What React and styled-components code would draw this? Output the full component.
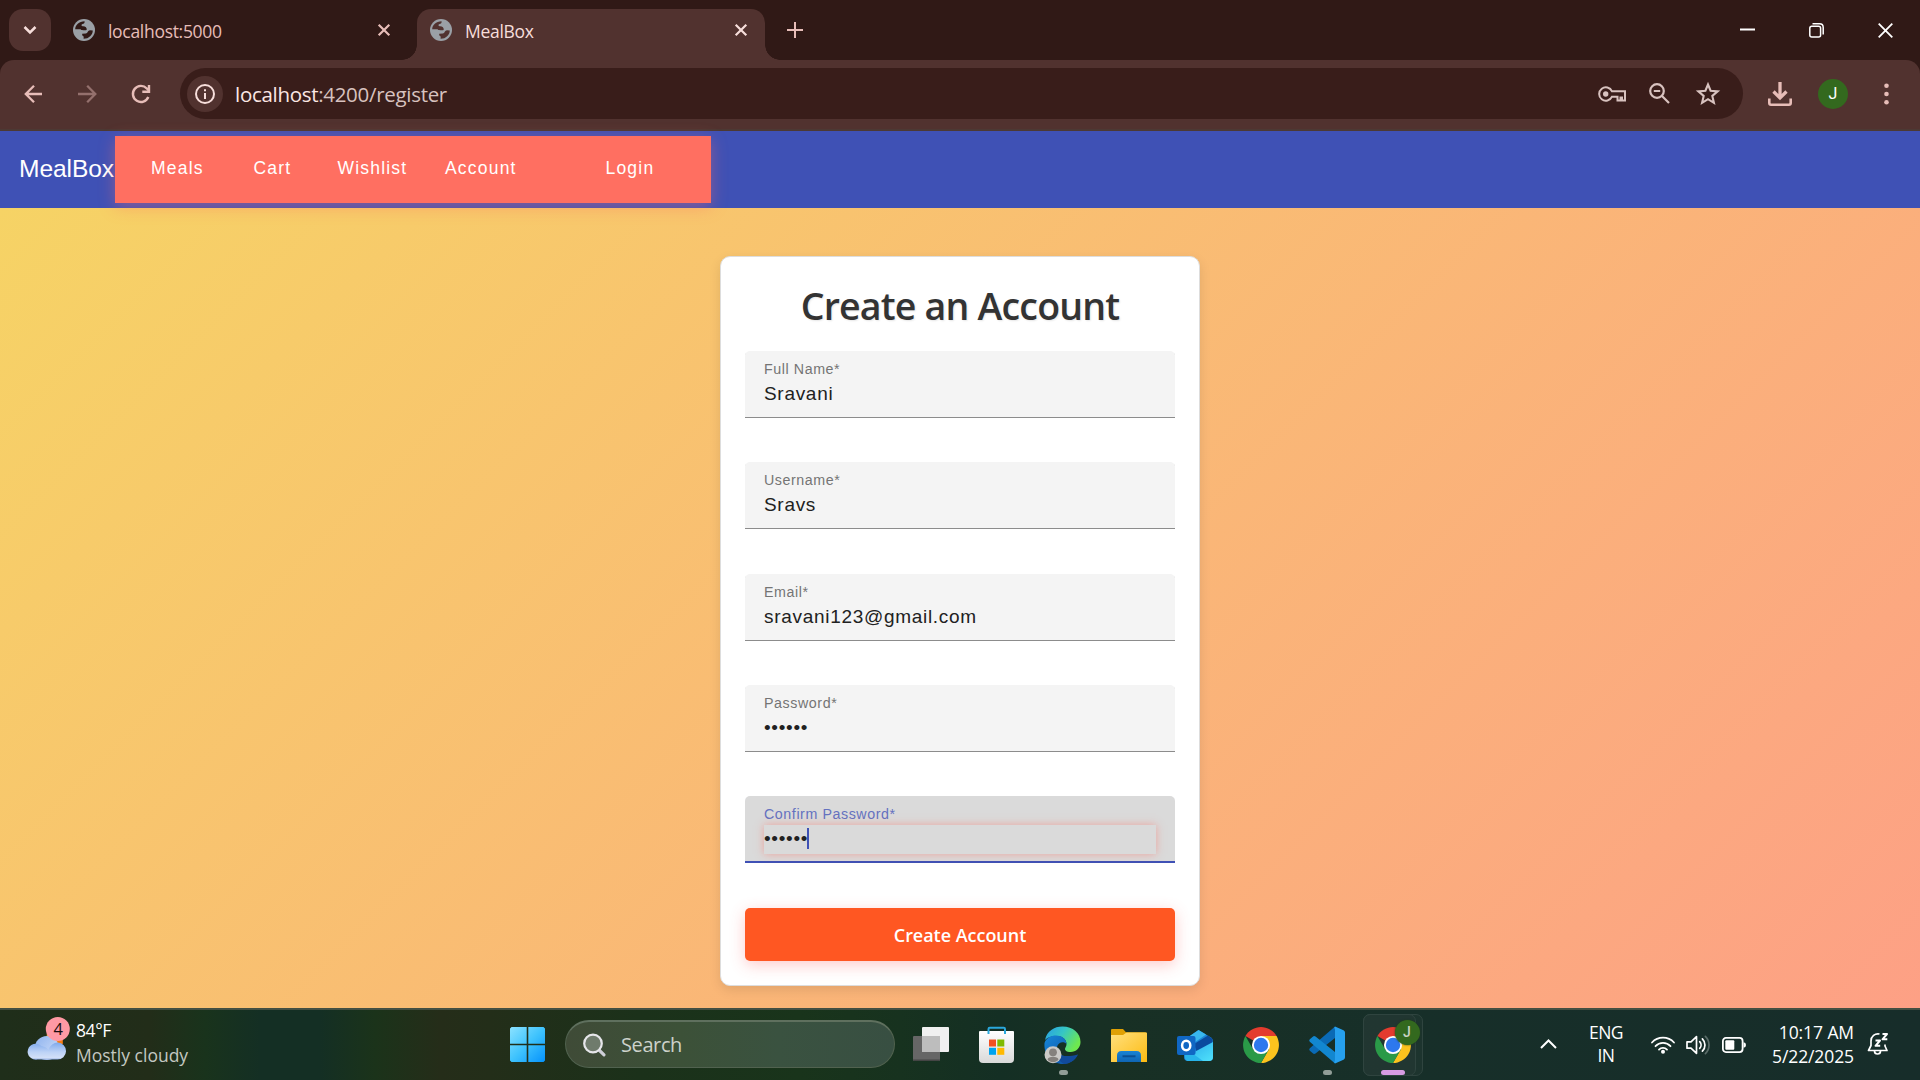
import React from "react";
import styled, { createGlobalStyle } from "styled-components";

const Global = createGlobalStyle`
  *, *::before, *::after { box-sizing: border-box; }
  html, body { margin: 0; padding: 0; overflow: hidden; background: #301916; }
  svg { display: block; flex: none; overflow: visible; }
`;

const ui = `"Open Sans", "Noto Sans", sans-serif`;
const arial = `"Liberation Sans", Arial, sans-serif`;

const Screen = styled.div`
  width: 1920px;
  height: 1080px;
  display: flex;
  flex-direction: column;
  overflow: hidden;
`;

/* ---------- browser frame ---------- */

const TabStrip = styled.div`
  height: 60px;
  flex: none;
  display: flex;
  background: #301916;
  padding: 9px 0 0 9px;
`;

const TabSearch = styled.div`
  width: 42px;
  height: 42px;
  border-radius: 14px;
  background: #51322f;
  display: flex;
  align-items: center;
  justify-content: center;
`;

const Tab = styled.div`
  position: relative;
  display: flex;
  align-items: center;
  width: ${(p) => (p.$active ? 348 : 344)}px;
  height: 51px;
  margin-left: ${(p) => (p.$active ? 0 : 22)}px;
  padding: 0 17px 9px ${(p) => (p.$active ? 13 : 0)}px;
  border-radius: 14px 14px 0 0;
  background: ${(p) => (p.$active ? "#51322f" : "transparent")};
  color: ${(p) => (p.$active ? "#f7dedb" : "#e7bdb8")};
  &::before, &::after {
    content: "";
    display: ${(p) => (p.$active ? "block" : "none")};
    position: absolute;
    bottom: 0;
    width: 15px;
    height: 15px;
  }
  &::before {
    left: -15px;
    background: radial-gradient(circle at 0 0, transparent 14.5px, #51322f 15px);
  }
  &::after {
    right: -15px;
    background: radial-gradient(circle at 100% 0, transparent 14.5px, #51322f 15px);
  }
`;

const TabTitle = styled.span`
  flex: 1;
  margin-left: 13px;
  font: 400 17.5px/24px ${ui};
  letter-spacing: ${(p) => p.$track || "-0.3px"};
  padding-top: 1px;
`;

const TabClose = styled.span`
  margin-right: ${(p) => p.$gap || 0}px;
`;

const NewTab = styled.div`
  margin-left: 22px;
  height: 42px;
  display: flex;
  align-items: center;
`;

const WindowButtons = styled.div`
  margin-left: auto;
  margin-right: 27px;
  height: 42px;
  display: flex;
  align-items: center;
  gap: 54px;
`;

const ToolbarBack = styled.div`
  flex: none;
  height: 71px;
  background: #301916;
`;

const Toolbar = styled.div`
  height: 71px;
  display: flex;
  align-items: center;
  padding: 0 0 2px 21px;
  border-radius: 14px 14px 0 0;
  background: #51322f;
  border-bottom: 2px solid #4c3934;
  color: #e7bdb8;
`;

const NavIcon = styled.span`
  flex: none;
  width: 24px;
  margin-right: ${(p) => p.$gap}px;
  opacity: ${(p) => (p.$dim ? 0.45 : 1)};
`;

const Omnibox = styled.div`
  flex: none;
  width: 1563px;
  height: 51px;
  border-radius: 26px;
  background: #391d1a;
  display: flex;
  align-items: center;
  padding: 0 23px 0 7px;
  color: #d8c2bf;
`;

const InfoBadge = styled.span`
  width: 36px;
  height: 36px;
  border-radius: 50%;
  background: #51322f;
  display: flex;
  align-items: center;
  justify-content: center;
`;

const Url = styled.span`
  flex: 1;
  margin-left: 12px;
  font: 400 20.5px/28px ${ui};
  letter-spacing: -0.3px;
  color: #d8c2bf;
  b { font-weight: 400; color: #fbe6e3; }
`;

const ToolIcon = styled.span`
  flex: none;
  margin-left: ${(p) => p.$gap}px;
`;

const Avatar = styled.span`
  flex: none;
  width: 30px;
  height: 30px;
  margin-left: 26px;
  border-radius: 50%;
  background: #33691e;
  color: #fff;
  display: flex;
  align-items: center;
  justify-content: center;
  font: 400 16px/30px Roboto, sans-serif;
`;

/* ---------- page ---------- */

const AppBar = styled.header`
  position: relative;
  z-index: 1;
  flex: none;
  height: 77px;
  display: flex;
  align-items: center;
  padding-left: 19px;
  background: #3f51b5;
`;

const Brand = styled.span`
  width: 96px;
  padding-bottom: 2px;
  font: 400 24.6px/40px ${arial};
  letter-spacing: -0.1px;
  color: #fff;
  white-space: nowrap;
`;

const Menu = styled.nav`
  width: 596px;
  height: 67px;
  display: flex;
  align-items: center;
  padding: 0 0 4px 36px;
  background: #ff6f61;
  box-shadow: 0 4px 15px rgba(255, 111, 97, 0.4);
`;

const MenuLink = styled.a`
  width: ${(p) => p.$w}px;
  font: 400 17.5px/24px ${arial};
  letter-spacing: 1.2px;
  color: #fff;
  white-space: nowrap;
`;

const Page = styled.main`
  flex: none;
  height: 800px;
  display: flex;
  justify-content: center;
  align-items: flex-start;
  padding-top: 48px;
  background: linear-gradient(135deg, #f6d365 0%, #fda085 100%);
`;

const Card = styled.section`
  width: 480px;
  height: 730px;
  padding: 24px;
  border: 1px solid #ddd;
  border-radius: 10px;
  background: #fff;
  box-shadow: 0 4px 12px rgba(0, 0, 0, 0.1);
  display: flex;
  flex-direction: column;
`;

const Heading = styled.h1`
  margin: 0 0 20px;
  height: 50px;
  text-align: center;
  white-space: nowrap;
  font: 600 37.5px/49px ${ui};
  letter-spacing: -0.8px;
  color: #333;
  text-shadow: 1px 1px 2px rgba(0, 0, 0, 0.1);
`;

const Field = styled.label`
  display: flex;
  flex-direction: column;
  flex: none;
  height: 67px;
  margin-bottom: ${(p) => p.$gap || 44}px;
  padding: 8px 19px 0;
  border-radius: 5px 5px 0 0;
  background: ${(p) => (p.$focus ? "#dadada" : "#f4f4f4")};
  box-shadow: inset 0 ${(p) => (p.$focus ? "-2px #3f51b5" : "-1px #8c8c8c")};
`;

const FieldLabel = styled.span`
  padding-bottom: 1px;
  font: 400 14.25px/20px ${arial};
  letter-spacing: 0.57px;
  color: ${(p) => (p.$focus ? "#6572c0" : "#747474")};
`;

const FieldValue = styled.span`
  display: flex;
  align-items: flex-start;
  height: 29px;
  font: 400 19px/27px ${arial};
  letter-spacing: 0.7px;
  color: #212121;
  box-shadow: ${(p) => (p.$focus ? "0 0 8px rgba(255, 111, 97, 0.5)" : "none")};
`;

const Caret = styled.i`
  width: 2px;
  height: 21px;
  margin: 3px 0 0 -1px;
  background: #3f51b5;
`;

const Submit = styled.button`
  flex: none;
  height: 53px;
  border: 0;
  border-radius: 5px;
  background: #ff5722;
  color: #fff;
  padding: 1px 0 0;
  font: 600 18px/52px ${ui};
  letter-spacing: -0.03px;
  box-shadow: 0 4px 15px rgba(255, 82, 82, 0.3);
`;

/* ---------- taskbar ---------- */

const Taskbar = styled.footer`
  flex: none;
  height: 72px;
  display: grid;
  grid-template-columns: 494px 932px 494px;
  border-top: 2px solid #434f42;
  background: linear-gradient(90deg, #1f2e1a 0, #222d19 150px, #19331c 205px, #142f24 260px, #142f24 320px, #1b331a 375px, #252d19 440px, #232e19 490px, #1b311a 640px, #19341b 800px, #17321f 900px, #142f24 1000px, #183024 1100px, #172f29 1400px, #172d2a 1920px);
  color: #fff;
`;

const Weather = styled.div`
  display: flex;
  padding: 6px 0 0 28px;
`;

const WeatherText = styled.div`
  display: flex;
  flex-direction: column;
  margin-left: 5px;
  padding-top: 2px;
  font: 400 17.5px/24.5px ${ui};
`;

const Temp = styled.span`
  letter-spacing: -0.4px;
`;

const Condition = styled.span`
  color: #c3c8c1;
`;

const Apps = styled.div`
  display: flex;
  padding-left: 16px;
`;

const SearchBox = styled.div`
  width: 330px;
  height: 48px;
  margin: 10px 3px 0 20px;
  border-radius: 24px;
  border: 1px solid #51624f;
  border-top: 2px solid #5f705e;
  background: linear-gradient(90deg, #3f4b37, #3c5138 35%, #3a5240 65%, #384f42);
  display: flex;
  align-items: center;
  padding-left: 17px;
`;

const SearchText = styled.span`
  margin-left: 15px;
  font: 400 20px/28px ${ui};
  letter-spacing: -0.4px;
  color: #cdd2cb;
`;

const StartCell = styled.div`
  padding-top: 17px;
`;

const AppCell = styled.div`
  position: relative;
  width: 66px;
  height: 70px;
  display: flex;
  justify-content: center;
  padding: 16px ${(p) => p.$nudge || 0}px 0 0;
`;

const Running = styled.i`
  position: absolute;
  bottom: 5px;
  left: ${(p) => (p.$wide ? 21 : 28.5)}px;
  width: ${(p) => (p.$wide ? 24 : 9)}px;
  height: 5px;
  border-radius: 3px;
  background: ${(p) => (p.$wide ? "#d79be3" : "#919d97")};
`;

const ActiveCell = styled(AppCell)`
  &::before, &::after {
    content: "";
    position: absolute;
    top: 4px;
    left: 3px;
    height: 62px;
    border-radius: 7px;
    border: 1px solid #2f443f;
    background: #24393480;
  }
  &::before { width: 60px; }
  &::after { width: 53px; background: #24393499; }
  svg, i { z-index: 1; }
`;

const ProfileBadge = styled.span`
  position: absolute;
  z-index: 2;
  left: 34.5px;
  top: 10px;
  width: 25px;
  height: 25px;
  border-radius: 50%;
  background: #33691e;
  box-shadow: 0 0 2px #1c3a1c;
  color: #c9d3c4;
  text-align: center;
  font: 500 14px/25px Roboto, sans-serif;
`;

const Tray = styled.div`
  display: flex;
  align-items: center;
  padding-left: 114px;
`;

const Language = styled.div`
  width: 46px;
  margin-left: 26px;
  padding-bottom: 3px;
  text-align: center;
  font: 400 17.5px/23px ${ui};
  letter-spacing: -0.5px;
`;

const TrayIcons = styled.div`
  display: flex;
  align-items: center;
  gap: 11px;
  margin-left: 22px;
`;

const Clock = styled.div`
  width: 100px;
  margin: 0 13px 0 8px;
  padding-bottom: 3px;
  text-align: right;
  white-space: nowrap;
  font: 400 17.5px/24px ${ui};
  letter-spacing: -0.1px;
`;

/* ---------- drawings ---------- */

const Globe = ({ bg }) => (
  <svg width="22" height="22" viewBox="0 0 22 22">
    <circle cx="11" cy="11" r="11" fill="#9aa0a6" />
    <path d="M2.200 10.300C2.200 6 6 2.200 11.600 2.200C11.800 4 11 4.900 9.500 5.100C8 5.500 8.200 7.300 9.800 7.300C12.500 7.200 14 8.800 13.700 11C12 11.400 11 11.200 9 11C7.800 10.900 8 10.200 6.500 10.200Z" fill={bg} />
    <path d="M19.800 11.500C19.600 16 16 19.800 10.600 19.800L10.700 17.500C9.500 17 9 16 9.200 14.700L12.800 14.500C14.800 14.300 14.700 11.500 17 11.300Z" fill={bg} />
  </svg>
);

const Cross = ({ size, color = "currentColor", w = 2 }) => (
  <svg width={size} height={size} viewBox={`0 0 ${size} ${size}`} stroke={color} strokeWidth={w} fill="none">
    <path d={`M.7 .7L${size - 0.7} ${size - 0.7}M${size - 0.7} .7L.7 ${size - 0.7}`} />
  </svg>
);

const Arrow = ({ flip }) => (
  <svg width="24" height="24" viewBox="0 0 24 24" fill="none" stroke="currentColor" strokeWidth="2.300">
    <path d={flip ? "M3 12H20M12.200 3.800L20.300 12L12.200 20.200" : "M21 12H5M13 3.800L4.800 12L13 20.200"} />
  </svg>
);

const Reload = () => (
  <svg width="24" height="24" viewBox="0 0 24 24" fill="none" stroke="currentColor" strokeWidth="2.400">
    <path d="M20.300 15A8 8 0 1 1 18.800 6.500L21 8.500" />
    <path d="M21 3V9.700H14.300" />
  </svg>
);

const Info = () => (
  <svg width="20" height="20" viewBox="0 0 20 20">
    <circle cx="10" cy="10" r="9" fill="none" stroke="#f7dedb" strokeWidth="2" />
    <path d="M10 9V15M10 5.200V7.200" stroke="#f7dedb" strokeWidth="2" />
  </svg>
);

const KeyIcon = () => (
  <svg width="28" height="16" viewBox="0 0 28 16" fill="none" stroke="currentColor" strokeWidth="2">
    <path d="M14 5.300A6.700 6.700 0 1 0 14 10.700H19.500V14.500H22.500V11.500H24V14.500H27V5.300Z" />
    <circle cx="7.700" cy="8" r="2.700" fill="currentColor" stroke="none" />
  </svg>
);

const ZoomOut = () => (
  <svg width="21" height="21" viewBox="0 0 21 21" fill="none" stroke="currentColor" strokeWidth="2.200">
    <circle cx="8" cy="8" r="6.800" />
    <path d="M13 13L20 20M4.800 8H11.200" />
  </svg>
);

const Star = () => (
  <svg width="24" height="23" viewBox="0 0 24 23" fill="none" stroke="currentColor" strokeWidth="2.100">
    <path d="M12 2.500L14.600 8.700L21.700 9.400L16.300 14L17.900 20.800L12 17.200L6.100 20.800L7.700 14L2.300 9.400L9.400 8.700Z" />
  </svg>
);

const Download = () => (
  <svg width="24" height="24" viewBox="0 0 24 24" fill="none" stroke="currentColor">
    <path d="M12 0V16M5.500 9.500L12 16L18.500 9.500" strokeWidth="3.300" />
    <path d="M1.300 16.500V21Q1.300 22.700 3 22.700H21Q22.700 22.700 22.700 21V16.500" strokeWidth="2.600" />
  </svg>
);

const Dots = () => (
  <svg width="5" height="22" viewBox="0 0 5 22" fill="currentColor">
    <circle cx="2.500" cy="2.800" r="2.300" />
    <circle cx="2.500" cy="11" r="2.300" />
    <circle cx="2.500" cy="19.200" r="2.300" />
  </svg>
);

const CloudSun = () => (
  <svg width="43" height="44" viewBox="-.8 -1 43 44">
    <defs>
      <linearGradient id="cl" x1="0" y1="0" x2="0" y2="1">
        <stop offset="0" stopColor="#7ea9ec" />
        <stop offset=".55" stopColor="#bcd2f6" />
        <stop offset=".9" stopColor="#d3e0f8" />
        <stop offset="1" stopColor="#7f9fdc" />
      </linearGradient>
      <linearGradient id="cl2" x1="0" y1="0" x2="1" y2="1">
        <stop offset="0" stopColor="#8db2ee" />
        <stop offset="1" stopColor="#d6e3fa" />
      </linearGradient>
    </defs>
    <path d="M18 18L34 20V27H20Z" fill="#f57c14" />
    <path d="M18 17L22 20L18 22Z" fill="#f0b030" />
    <circle cx="18" cy="31" r="12" fill="url(#cl2)" />
    <path d="M8.500 42.500A8 8 0 1 1 12.500 29Q18 30 19.500 33Q22.500 25.500 29 25.500A8.500 8.500 0 0 1 28.500 42.500Z" fill="url(#cl)" />
    <circle cx="29" cy="12" r="12" fill="#ff99a4" />
    <text x="29.500" y="18" textAnchor="middle" fontFamily="Open Sans, sans-serif" fontSize="16.500" fill="#1a0d0e">4</text>
  </svg>
);

const StartLogo = () => (
  <svg width="35" height="35" viewBox="0 0 35 35">
    <defs>
      <linearGradient id="st" x1="0" y1="0" x2="35" y2="35" gradientUnits="userSpaceOnUse">
        <stop offset="0" stopColor="#8be2ff" />
        <stop offset=".5" stopColor="#3fc3fd" />
        <stop offset="1" stopColor="#0592fb" />
      </linearGradient>
    </defs>
    <path fill="url(#st)" d="M1.500 0H16.700V16.700H0V1.500ZM18.300 0H33.500L35 1.500V16.700H18.300ZM0 18.300H16.700V35H1.500L0 33.500ZM18.300 18.300H35V33.500L33.500 35H18.300Z" />
  </svg>
);

const SearchGlyph = () => (
  <svg width="23" height="24" viewBox="0 0 23 24" fill="none">
    <path d="M15.500 16.500L21 21.800" stroke="#cfcfd8" strokeWidth="3.200" strokeLinecap="round" />
    <circle cx="10" cy="10.500" r="8.800" stroke="#e6e6ea" strokeWidth="2.200" fill="#6f7b6c" />
  </svg>
);

const TaskView = () => (
  <svg width="36" height="36" viewBox="0 0 36 36">
    <rect x="9" y="1" width="27" height="25" rx="1" fill="#f0f0f0" />
    <rect x="0" y="10" width="27" height="25" rx="1" fill="#666" />
    <path d="M9 10H27V26H9Z" fill="#bdbdbd" />
    <path d="M0 33.500H27V34Q27 35 26 35H1Q0 35 0 34Z" fill="#454545" />
  </svg>
);

const StoreLogo = () => (
  <svg width="35" height="37" viewBox="0 0 35 37">
    <defs>
      <linearGradient id="bag" x1="0" y1="0" x2="0" y2="1">
        <stop offset="0" stopColor="#fff" />
        <stop offset="1" stopColor="#d9d9d9" />
      </linearGradient>
    </defs>
    <path d="M0 6Q0 5 1 5H34Q35 5 35 6V33Q35 37 31 37H4Q0 37 0 33Z" fill="url(#bag)" />
    <path d="M9.500 8V3Q9.500 1.800 10.700 1.800H24.800Q26 1.800 26 3V8" fill="none" stroke="#2aa8dc" strokeWidth="2" />
    <path d="M10 13.500H17V20.500H10Z" fill="#f25022" />
    <path d="M18.300 13.500H25.300V20.500H18.300Z" fill="#7fba00" />
    <path d="M10 21.800H17V28.800H10Z" fill="#00a4ef" />
    <path d="M18.300 21.800H25.300V28.800H18.300Z" fill="#ffb900" />
  </svg>
);

const EdgeLogo = () => (
  <svg width="37" height="38" viewBox="0 0 37 38">
    <defs>
      <linearGradient id="e1" x1="0" y1="0" x2="1" y2=".5">
        <stop offset=".1" stopColor="#2aa5e0" />
        <stop offset=".5" stopColor="#36c6c4" />
        <stop offset="1" stopColor="#6ee84f" />
      </linearGradient>
      <linearGradient id="e2" x1="0" y1="0" x2="1" y2="1">
        <stop offset="0" stopColor="#1686d8" />
        <stop offset="1" stopColor="#0e4b9e" />
      </linearGradient>
    </defs>
    <path d="M1 14C3 5 10 .5 18.500 .5C29 .5 36.500 7 36.500 16C36.500 22 32 26 26.500 26C22.500 26 21 24.500 21 23C21 21.500 22.500 21 22.500 18C22.500 13 18 10 12.500 10C7 10 3 12 1 14Z" fill="url(#e1)" />
    <path d="M.5 17C2 12 7 9.500 12 9.500C18 9.500 22.500 13 22.500 18C20 15 14 16 13 21C12 29 19 34 27 32C30 31.200 32 30 33.700 28.500C31 34.500 25 38 19 38C8 38 -.5 29 .5 17Z" fill="url(#e2)" />
    <path d="M13 22C12.500 27 17 33 34 28.500C31 34.500 26 37.500 20.500 38C14 35 11 29 13 22Z" fill="#114a9c" />
    <circle cx="9" cy="28.800" r="8.500" fill="#cbc9c6" />
    <circle cx="9" cy="26.300" r="3.900" fill="#85817d" />
    <path d="M3.500 33.500C4 29.800 14 29.800 14.500 33.500C12 37 6 37 3.500 33.500Z" fill="#85817d" />
  </svg>
);

const FolderLogo = () => (
  <svg width="36" height="38" viewBox="0 0 36 38">
    <defs>
      <linearGradient id="fo" x1="0" y1="0" x2="1" y2="1">
        <stop offset="0" stopColor="#ffe07e" />
        <stop offset="1" stopColor="#fdbb12" />
      </linearGradient>
      <linearGradient id="fb" x1="0" y1="0" x2="0" y2="1">
        <stop offset="0" stopColor="#1a84d4" />
        <stop offset="1" stopColor="#0f65b4" />
      </linearGradient>
    </defs>
    <path d="M0 4Q0 3 1 3H12L15 6.200H34Q36 6.200 36 8V14H0Z" fill="#dfa005" />
    <path d="M0 9H12L15.500 6.500H35Q36 6.500 36 7.500V36H0Z" fill="url(#fo)" />
    <path d="M6 36V29.500Q6 25 10.500 25H25.500Q30 25 30 29.500V36Z" fill="url(#fb)" />
    <path d="M11.500 30.300H24.500" stroke="#0b4f92" strokeWidth="2" />
  </svg>
);

const OutlookLogo = () => (
  <svg width="36" height="38" viewBox="0 0 36 38">
    <defs>
      <linearGradient id="ol" x1="0" y1="0" x2="1" y2="1">
        <stop offset="0" stopColor="#28a8ea" />
        <stop offset="1" stopColor="#50e2fb" />
      </linearGradient>
    </defs>
    <path d="M7 14L21.500 4L34 11.500Q36 13 36 15.500V31Q36 35 32 35H11Q7 35 7 31Z" fill="#1d86d8" />
    <path d="M10 12L21.500 4L29 8.500L14 19Z" fill="#39b7ee" />
    <path d="M17 18L31 9.500L35.500 13V18L20 27Z" fill="#0a4a9e" />
    <path d="M8 31L36 16V31Q36 35 32 35H12Q9 35 8 31Z" fill="url(#ol)" />
    <path d="M8 22L26 35H12Q8 35 8 31Z" fill="#27b3ea" />
    <rect x="0" y="10" width="18.500" height="19" rx="2" fill="#1067c4" />
    <ellipse cx="9.200" cy="19.500" rx="4.100" ry="4.700" fill="none" stroke="#fff" strokeWidth="2.500" />
  </svg>
);

const ChromeLogo = () => (
  <svg width="36" height="38" viewBox="-18.500 -19.200 37 38.400">
    <path d="M0 0L-16 -9.200A18.500 18.500 0 0 1 16 -9.200Z" fill="#e33b2e" />
    <path d="M0 -9.200H16A18.500 18.500 0 0 1 0 18.500L8 4.600Z" fill="#fcc31e" />
    <path d="M0 18.500A18.500 18.500 0 0 1 -16 -9.200L-8 4.600L0 9.200L8 4.600Z" fill="#2a9a48" />
    <circle r="9.300" fill="#fff" />
    <circle r="7.400" fill="#2d78ee" />
  </svg>
);

const CodeLogo = () => (
  <svg width="36" height="38" viewBox="0 0 36 38">
    <path d="M26 .5V12L6.500 27.500Q5 28.500 3.800 27.300L.8 24.800Q-.4 23.500 .8 22.300Z" fill="#0a6ab5" />
    <path d="M26 37.500V26L6.500 10.500Q5 9.500 3.800 10.700L.8 13.200Q-.4 14.500 .8 15.700Z" fill="#1287d0" />
    <path d="M26 .5L34.500 4.300Q36 5 36 6.500V31.500Q36 33 34.500 33.700L26 37.500Q24.500 36.500 26 34.500V3.500Q24.500 1.500 26 .5Z" fill="#26a0ee" />
  </svg>
);

const Chevron = () => (
  <svg width="17" height="10" viewBox="0 0 17 10" fill="none" stroke="#fff" strokeWidth="2">
    <path d="M1 8L8.500 .5L16 8" />
  </svg>
);

const Wifi = () => (
  <svg width="24" height="18" viewBox="0 0 24 18" fill="none" stroke="#fff" strokeWidth="1.800" strokeLinecap="round">
    <path d="M1 6.500A15 15 0 0 1 23 6.500M4.500 10.200A10.300 10.300 0 0 1 19.500 10.200M8 13.600A5.500 5.500 0 0 1 16 13.600" />
    <circle cx="12" cy="15.800" r="2" fill="#fff" stroke="none" />
  </svg>
);

const Speaker = () => (
  <svg width="25" height="20" viewBox="0 0 25 20" fill="none" stroke="#fff" strokeWidth="1.700" strokeLinejoin="round" strokeLinecap="round">
    <path d="M1 6.800H5L10.500 1.700V18.300L5 13.200H1Z" />
    <path d="M13.700 6.600A5 5 0 0 1 13.700 13.400M16.400 3.800A8.800 8.800 0 0 1 16.400 16.200" />
    <path d="M19.400 1.300A12.300 12.300 0 0 1 19.400 18.700" stroke="#5a6c68" />
  </svg>
);

const Battery = () => (
  <svg width="24" height="16" viewBox="0 0 24 16">
    <rect x=".9" y=".9" width="19.700" height="14.200" rx="3" fill="none" stroke="#fff" strokeWidth="1.800" />
    <rect x="3.300" y="3.300" width="9" height="9.400" rx="1" fill="#fff" />
    <path d="M21.500 5.200Q24 5.500 24 8T21.500 10.800Z" fill="#fff" />
  </svg>
);

const Bell = () => (
  <svg width="22" height="24" viewBox="0 1 22 24" fill="none" stroke="#fff" strokeWidth="1.700" strokeLinejoin="round">
    <path d="M12.500 2A7 7 0 0 0 4 9V13.500L1.500 18.500H20L18 14V12.500" />
    <path d="M7.500 19A3 3 0 0 0 13.500 19" />
    <path d="M8.500 8.500H13L8.500 13.800H13.200M15.500 2H20L15.500 7.300H20.300" strokeWidth="2" />
  </svg>
);

const Minimize = () => (
  <svg width="15" height="15" viewBox="0 0 15 15"><path d="M0 6.500H15" stroke="#fff" strokeWidth="2" /></svg>
);

const Restore = () => (
  <svg width="15" height="15" viewBox="0 0 15 15" fill="none" stroke="#fff" strokeWidth="1.500">
    <rect x=".8" y="3.300" width="10.800" height="10.800" rx="2" />
    <path d="M3.500 .8H10.500Q14.200 .8 14.200 4.500V11.500" />
  </svg>
);

const fields = [
  { label: "Full Name*", value: "Sravani", gap: 44 },
  { label: "Username*", value: "Sravs", gap: 45 },
  { label: "Email*", value: "sravani123@gmail.com", gap: 44 },
  { label: "Password*", value: "••••••", gap: 44 },
  { label: "Confirm Password*", value: "••••••", gap: 45, focus: true },
];

const links = [
  ["Meals", 102.5],
  ["Cart", 84],
  ["Wishlist", 107.5],
  ["Account", 160.5],
  ["Login", 60],
];

export default function App() {
  return (
    <Screen>
      <Global />
      <TabStrip>
        <TabSearch>
          <svg width="14" height="8" viewBox="0 0 14 8" fill="none" stroke="#f7dedb" strokeWidth="2.500"><path d="M1.500 1L7 6.500L12.500 1" /></svg>
        </TabSearch>
        <Tab>
          <Globe bg="#301916" />
          <TabTitle>localhost:5000</TabTitle>
          <TabClose $gap={10}><Cross size={12} w={2.2} /></TabClose>
        </Tab>
        <Tab $active>
          <Globe bg="#51322f" />
          <TabTitle>MealBox</TabTitle>
          <TabClose $gap={1}><Cross size={12} w={2.2} /></TabClose>
        </Tab>
        <NewTab>
          <svg width="16" height="16" viewBox="0 0 16 16" stroke="#e7bdb8" strokeWidth="2"><path d="M8 0V16M0 8H16" /></svg>
        </NewTab>
        <WindowButtons>
          <Minimize />
          <Restore />
          <Cross size={15} color="#fff" w={1.8} />
        </WindowButtons>
      </TabStrip>
      <ToolbarBack>
        <Toolbar>
          <NavIcon $gap={30}><Arrow /></NavIcon>
          <NavIcon $gap={29} $dim><Arrow flip /></NavIcon>
          <NavIcon $gap={28}><Reload /></NavIcon>
          <Omnibox>
            <InfoBadge><Info /></InfoBadge>
            <Url><b>localhost</b>:4200/register</Url>
            <ToolIcon $gap={0}><KeyIcon /></ToolIcon>
            <ToolIcon $gap={23}><ZoomOut /></ToolIcon>
            <ToolIcon $gap={26}><Star /></ToolIcon>
          </Omnibox>
          <ToolIcon $gap={25}><Download /></ToolIcon>
          <Avatar>J</Avatar>
          <ToolIcon $gap={36}><Dots /></ToolIcon>
        </Toolbar>
      </ToolbarBack>

      <AppBar>
        <Brand>MealBox</Brand>
        <Menu>
          {links.map(([text, w]) => <MenuLink key={text} $w={w}>{text}</MenuLink>)}
        </Menu>
      </AppBar>
      <Page>
        <Card>
          <Heading>Create an Account</Heading>
          {fields.map((f) => (
            <Field key={f.label} $gap={f.gap} $focus={f.focus}>
              <FieldLabel $focus={f.focus}>{f.label}</FieldLabel>
              <FieldValue $focus={f.focus}>{f.value}{f.focus && <Caret />}</FieldValue>
            </Field>
          ))}
          <Submit>Create Account</Submit>
        </Card>
      </Page>

      <Taskbar>
        <Weather>
          <CloudSun />
          <WeatherText>
            <Temp>84°F</Temp>
            <Condition>Mostly cloudy</Condition>
          </WeatherText>
        </Weather>
        <Apps>
          <StartCell><StartLogo /></StartCell>
          <SearchBox><SearchGlyph /><SearchText>Search</SearchText></SearchBox>
          <AppCell><TaskView /></AppCell>
          <AppCell $nudge={2}><StoreLogo /></AppCell>
          <AppCell $nudge={1}><EdgeLogo /><Running /></AppCell>
          <AppCell><FolderLogo /></AppCell>
          <AppCell><OutlookLogo /></AppCell>
          <AppCell><ChromeLogo /></AppCell>
          <AppCell><CodeLogo /><Running /></AppCell>
          <ActiveCell><ChromeLogo /><ProfileBadge>J</ProfileBadge><Running $wide /></ActiveCell>
        </Apps>
        <Tray>
          <Chevron />
          <Language>ENG<br />IN</Language>
          <TrayIcons><Wifi /><Speaker /><Battery /></TrayIcons>
          <Clock>10:17 AM<br />5/22/2025</Clock>
          <Bell />
        </Tray>
      </Taskbar>
    </Screen>
  );
}
